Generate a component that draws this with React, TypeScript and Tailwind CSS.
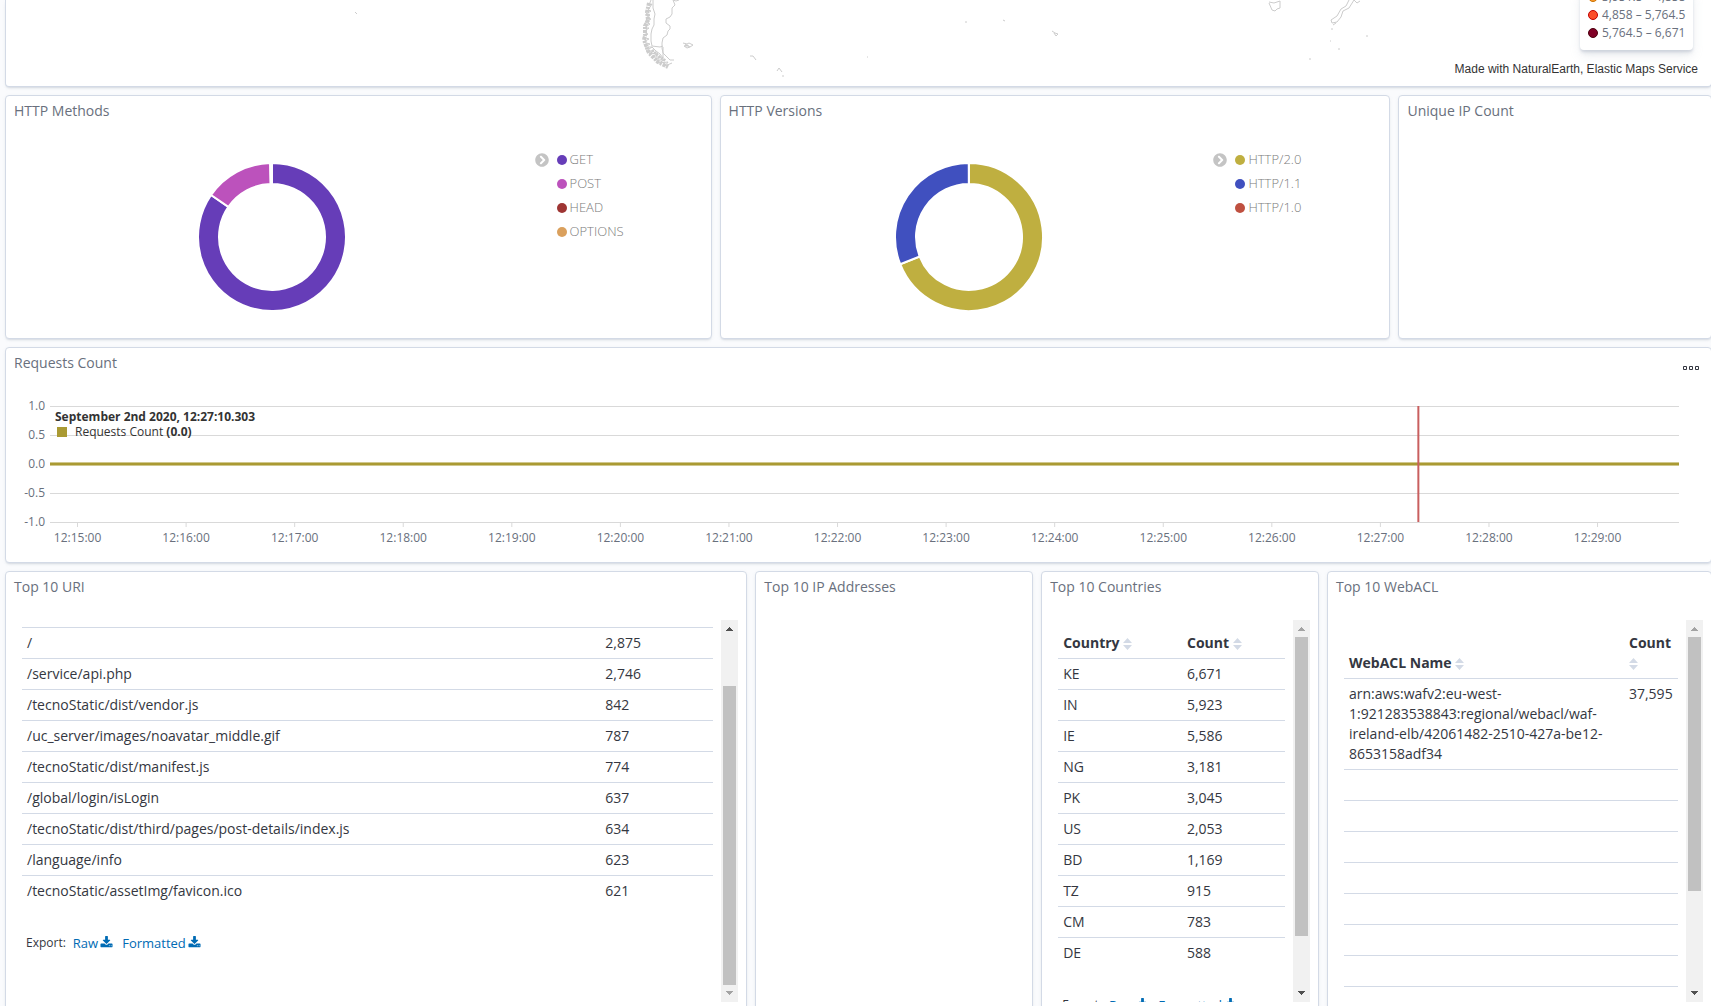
import type { ReactNode } from 'react';
import { FaChevronCircleRight } from 'react-icons/fa';

interface Slice {
    label: string;
    color: string;
    from: number;
    to: number;
}

interface Column {
    title: string;
    width?: string;
}

const METHODS: Slice[] = [
    { label: 'GET', color: '#663db8', from: 0, to: 304.6 },
    { label: 'POST', color: '#bc52bc', from: 304.6, to: 358.6 },
    { label: 'HEAD', color: '#9e3533', from: 358.6, to: 359.4 },
    { label: 'OPTIONS', color: '#daa05d', from: 359.4, to: 360 },
];

const VERSIONS: Slice[] = [
    { label: 'HTTP/2.0', color: '#bfaf40', from: 0, to: 248.4 },
    { label: 'HTTP/1.1', color: '#4050bf', from: 248.4, to: 359.9 },
    { label: 'HTTP/1.0', color: '#bf5040', from: 359.9, to: 360 },
];

const MAP_LEGEND = [
    { label: '3,951.5 – 4,858', fill: '#fd9a2c', border: '#c87200' },
    { label: '4,858 – 5,764.5', fill: '#fc4e2a', border: '#c00000' },
    { label: '5,764.5 – 6,671', fill: '#800026', border: '#4d0010' },
];

const URIS = [
    ['/', '2,875'],
    ['/service/api.php', '2,746'],
    ['/tecnoStatic/dist/vendor.js', '842'],
    ['/uc_server/images/noavatar_middle.gif', '787'],
    ['/tecnoStatic/dist/manifest.js', '774'],
    ['/global/login/isLogin', '637'],
    ['/tecnoStatic/dist/third/pages/post-details/index.js', '634'],
    ['/language/info', '623'],
    ['/tecnoStatic/assetImg/favicon.ico', '621'],
];

const COUNTRIES = [
    ['KE', '6,671'],
    ['IN', '5,923'],
    ['IE', '5,586'],
    ['NG', '3,181'],
    ['PK', '3,045'],
    ['US', '2,053'],
    ['BD', '1,169'],
    ['TZ', '915'],
    ['CM', '783'],
    ['DE', '588'],
];

// The table is padded with blank rows up to the page size
const WEB_ACLS = [
    ['arn:aws:wafv2:eu-west-1:921283538843:regional/webacl/waf-ireland-elb/42061482-2510-427a-be12-8653158adf34', '37,595'],
    ...Array.from({ length: 9 }, () => ['', '']),
];

const Y_TICKS = ['1.0', '0.5', '0.0', '-0.5', '-1.0'];
const X_TICKS = Array.from({ length: 15 }, (_, i) => `12:${15 + i}:00`);

function Panel({ title, action, className = '', children }: { title: string; action?: ReactNode; className?: string; children?: ReactNode }) {
    return (
        <section className={`flex min-h-0 flex-col rounded border border-[#d3dae6] bg-white shadow-[0_2px_2px_-1px_rgba(152,162,179,0.3),0_1px_5px_-2px_rgba(152,162,179,0.3)] ${className}`}>
            <header className="flex h-[30px] shrink-0 items-start justify-between px-2">
                <h2 className="text-sm leading-[30px] text-[#69707d]">{title}</h2>
                {action}
            </header>
            {children}
        </section>
    );
}

function arcPath(from: number, to: number) {
    const outer = 74;
    const inner = 53;
    const point = (r: number, deg: number) => {
        const a = (deg * Math.PI) / 180;
        return `${74 + r * Math.sin(a)} ${74 - r * Math.cos(a)}`;
    };
    const large = to - from > 180 ? 1 : 0;
    return `M${point(outer, from)}A${outer} ${outer} 0 ${large} 1 ${point(outer, to)}L${point(inner, to)}A${inner} ${inner} 0 ${large} 0 ${point(inner, from)}Z`;
}

function DonutPanel({ title, slices, className }: { title: string; slices: Slice[]; className: string }) {
    return (
        <Panel title={title} className={className}>
            <div className="flex">
                <div className="flex flex-1 justify-center pt-[37px] pb-[27px] pl-2">
                    <svg width="148" height="148" viewBox="0 0 148 148" role="img" aria-label={title}>
                        {slices.map((s) => (
                            <path key={s.label} d={arcPath(s.from, s.to)} fill={s.color} stroke="#fff" strokeWidth="2" />
                        ))}
                    </svg>
                </div>
                <div className="flex w-[180px] items-start gap-2 pt-[22px] pl-1">
                    <button type="button" aria-label="Toggle legend" className="flex h-6 items-center text-[#c4c4c4]">
                        <FaChevronCircleRight className="size-[14px]" />
                    </button>
                    <ul>
                        {slices.map((s) => (
                            <li key={s.label} className="flex h-6 items-center gap-[3px] text-[13px] font-light text-[#7b7b7b]">
                                <svg width="10" height="10" viewBox="0 0 10 10">
                                    <circle cx="5" cy="5" r="5" fill={s.color} />
                                </svg>
                                {s.label}
                            </li>
                        ))}
                    </ul>
                </div>
            </div>
        </Panel>
    );
}

function MapPanel() {
    return (
        <section className="relative flex h-[87px] shrink-0 flex-col items-end justify-between rounded-b border border-t-0 border-[#d3dae6] bg-white pr-[13px] pb-[7px] shadow-[0_2px_2px_-1px_rgba(152,162,179,0.3),0_1px_5px_-2px_rgba(152,162,179,0.3)]">
            <svg className="absolute inset-0 h-full w-full" viewBox="6 0 1705 86" fill="none" stroke="#ccc" strokeWidth="1">
                {/* Chile and Argentina */}
                <path d="M653 0v8l2 6-1 5 0 6-2 4-1 5 0 7 1 5 8 1 3-1" />
                <path d="M673 0l3 1 3-1M673 0l2 5-3 3 0 6-2 3-4 2v4l4 3v3l-2 2-1 4-4 3-1 5v5l1 5 5 5 2 2 4 0" />
                <path d="M663 47v14M652 47l4 4 4 3 3 4" />
                <path d="M651 0l-2 5 3-1-4 6 3 1-5 3 4 1-4 3 5 1-6 3 5 2-6 4 5 0-6 4 5 2-5 3 6 2-6 3 7 2-5 3 7 0-6 4 8 0-5 3 9-1-6 4 9 0-6 3 9 0-5 3 9-1-3 4 7-3" />
                <path d="M649 3l-2 9 1 8-3 6 0 9-1 5 3 8 2 5 5 5 4 4 6 3 4 2" strokeWidth="4" strokeDasharray="3 1 2 1" />
                <path d="M648 14v8M652 50l6 6 8 5" strokeWidth="3" strokeDasharray="2 1" />
                {/* Falklands and the southern islands */}
                <path d="M683 43l4 1 2-1 4 2-3 2-3 1-3-2 4-1M685 46l4 0M685 44l5 3M750 56l3 0 3 4M777 71l2-3 3 4M783 75l0 2" />
                <path d="M355 12l2 2M965 22h2M1003 20l2 1M1052 31l3 2 3 1-2 2-2-3M867 57h1" />
                {/* Tasmania and New Zealand */}
                <path d="M1269 2l5 1 6-2 0 7-3 1-2 2-3-1-3-7" />
                <path d="M1349 0l-3 6-5 3-4 7-6 4 1 3 5-1 4-5 2-6 6-3 5-8M1354 0l3 3 3-2M1333 25l3-2M1331 29h2M1366 36h2M1330 41h1M1338 49h2M1309 59h2" />
            </svg>
            <div className="relative mt-[-12px] mr-[5px] w-[113px] rounded bg-white px-2 pb-2 shadow-[0_6px_12px_-1px_rgba(152,162,179,0.2),0_4px_4px_-1px_rgba(152,162,179,0.2),0_2px_2px_0_rgba(152,162,179,0.2)]">
                <ul>
                    {MAP_LEGEND.map((item) => (
                        <li key={item.label} className="flex h-[18px] items-center gap-1 text-xs font-medium whitespace-nowrap text-[#69707d]">
                            <svg className="shrink-0" width="10" height="10" viewBox="0 0 10 10">
                                <circle cx="5" cy="5" r="4.5" fill={item.fill} stroke={item.border} />
                            </svg>
                            {item.label}
                        </li>
                    ))}
                </ul>
            </div>
            <p className="relative font-['Liberation_Sans',sans-serif] text-xs leading-5 text-[#333]">Made with NaturalEarth, Elastic Maps Service</p>
        </section>
    );
}

function RequestsPanel() {
    const menu = (
        <button type="button" aria-label="Series options" className="flex h-10 w-6 items-center justify-center">
            <svg width="16" height="4" viewBox="0 0 16 4" fill="none" stroke="#343741">
                <path d="M.5 .5h3v3h-3zM6.5 .5h3v3h-3zM12.5 .5h3v3h-3z" />
            </svg>
        </button>
    );

    return (
        <Panel title="Requests Count" action={menu} className="shrink-0">
            <div className="relative mr-8 mb-[14px] ml-[44px]">
                <svg className="block h-[170px] w-full overflow-visible text-xs" fill="#69707d">
                    {Y_TICKS.map((label, i) => (
                        <g key={label}>
                            <line x1="0" x2="100%" y1={28.5 + i * 29} y2={28.5 + i * 29} stroke="#d9d9d9" />
                            <text x="-5" y={32 + i * 29} textAnchor="end">{label}</text>
                        </g>
                    ))}
                    {X_TICKS.map((label, i) => (
                        <g key={label}>
                            <line x1={`${1.69 + i * 6.665}%`} x2={`${1.69 + i * 6.665}%`} y1="144" y2="149" stroke="#d9d9d9" />
                            <text x={`${1.69 + i * 6.665}%`} y="164" textAnchor="middle">{label}</text>
                        </g>
                    ))}
                    <line x1="0" x2="100%" y1="86" y2="86" stroke="#aa9a33" strokeOpacity="0.55" strokeWidth="4" />
                    <line x1="0" x2="100%" y1="86" y2="86" stroke="#aa9a33" strokeWidth="2" />
                    <line x1="84%" x2="84%" y1="28" y2="144" stroke="#c95f5f" strokeWidth="2" />
                </svg>
                <div className="absolute top-[31px] left-[5px] text-xs leading-[15px] text-[#333]">
                    <p className="font-bold">September 2nd 2020, 12:27:10.303</p>
                    <p className="flex items-center gap-2 pl-[2px]">
                        <span className="size-[10px] bg-[#aa9a33]" />
                        <span>Requests Count <b>(0.0)</b></span>
                    </p>
                </div>
            </div>
        </Panel>
    );
}

// size and offset are fractions of the track
function ScrollBar({ size, offset = 0 }: { size: number; offset?: number }) {
    return (
        <div className="flex w-[17px] shrink-0 flex-col bg-[#f1f1f1]">
            <svg width="17" height="17" viewBox="0 0 17 17" fill={offset > 0 ? '#505050' : '#a3a3a3'} shapeRendering="crispEdges">
                <path d="M5 11l3.500-4 3.500 4z" />
            </svg>
            <div className="flex-1 px-[2px]">
                <div style={{ height: `${offset * 100}%` }} />
                <div className="bg-[#c1c1c1]" style={{ height: `${size * 100}%` }} />
            </div>
            <svg width="17" height="17" viewBox="0 0 17 17" fill={offset + size < 1 ? '#505050' : '#a3a3a3'} shapeRendering="crispEdges">
                <path d="M5 6l3.500 4 3.500-4z" />
            </svg>
        </div>
    );
}

function SortIcon() {
    return (
        <svg className="inline-block" width="9" height="12" viewBox="0 0 9 12" fill="#d3dae6">
            <path d="M0 5l4.500-5 4.500 5zM0 7h9l-4.500 5z" />
        </svg>
    );
}

function DownloadIcon() {
    return (
        <svg width="13" height="13" viewBox="0 0 1792 1792" fill="currentColor">
            <path d="M1344 1344q0-26-19-45t-45-19-45 19-19 45 19 45 45 19 45-19 19-45zm256 0q0-26-19-45t-45-19-45 19-19 45 19 45 45 19 45-19 19-45zm128-224v320q0 40-28 68t-68 28h-1472q-40 0-68-28t-28-68v-320q0-40 28-68t68-28h465l135 136q58 56 136 56t136-56l136-136h464q40 0 68 28t28 68zm-325-569q17 41-14 70l-448 448q-18 19-45 19t-45-19l-448-448q-31-29-14-70 17-39 59-39h256v-448q0-26 19-45t45-19h256q26 0 45 19t19 45v448h256q42 0 59 39z" />
        </svg>
    );
}

interface TablePanelProps {
    title: string;
    columns: Column[];
    rows: string[][];
    showHead?: boolean;
    scroll: { size: number; offset?: number };
    className: string;
}

function TablePanel({ title, columns, rows, showHead = true, scroll, className }: TablePanelProps) {
    return (
        <Panel title={title} className={className}>
            <div className="mx-2 mt-[18px] mb-[7px] flex min-h-0 flex-1">
                <div className={`min-w-0 flex-1 overflow-hidden px-2 ${showHead ? 'pt-2' : 'pt-[7px]'}`}>
                    <table className="w-full table-fixed text-left text-sm leading-5 text-[#343741]">
                        <colgroup>
                            {columns.map((c) => (
                                <col key={c.title} className={c.width} />
                            ))}
                        </colgroup>
                        {showHead && (
                            <thead>
                                <tr>
                                    {columns.map((c) => (
                                        <th key={c.title} className="p-[5px] align-bottom font-bold">
                                            <button type="button" className="block text-left">
                                                {c.title} <SortIcon />
                                            </button>
                                        </th>
                                    ))}
                                </tr>
                            </thead>
                        )}
                        <tbody>
                            {rows.map((row, i) => (
                                <tr key={i} className="h-[31px] border-t border-[#d3dae6]">
                                    {row.map((cell, j) => (
                                        <td key={j} className="p-[5px] align-top">{cell}</td>
                                    ))}
                                </tr>
                            ))}
                        </tbody>
                    </table>
                    <div className="mt-[26px] flex items-center gap-[7px] pl-1 text-xs leading-5 text-[#343741]">
                        <span>Export:</span>
                        <a href="#raw" className="flex items-center gap-[2px] text-[13px] text-[#006bb4]">
                            Raw <DownloadIcon />
                        </a>
                        <a href="#formatted" className="ml-[2px] flex items-center gap-[2px] text-[13px] text-[#006bb4]">
                            Formatted <DownloadIcon />
                        </a>
                    </div>
                </div>
                <ScrollBar {...scroll} />
            </div>
        </Panel>
    );
}

export default function App() {
    return (
        <div className="overflow-hidden">
            <main className="-mr-px flex h-screen flex-col gap-2 overflow-hidden bg-[#fafbfd] pl-[5px] font-['Open_Sans',sans-serif]">
                <MapPanel />
                <div className="grid shrink-0 grid-cols-[repeat(48,minmax(0,1fr))] gap-x-2">
                    <DonutPanel title="HTTP Methods" slices={METHODS} className="col-span-20" />
                    <DonutPanel title="HTTP Versions" slices={VERSIONS} className="col-span-19" />
                    <Panel title="Unique IP Count" className="col-span-9" />
                </div>
                <RequestsPanel />
                <div className="-mb-1 grid min-h-0 flex-1 grid-cols-[repeat(48,minmax(0,1fr))] grid-rows-[minmax(0,1fr)] gap-x-2">
                    <TablePanel
                        title="Top 10 URI"
                        columns={[{ title: 'URI' }, { title: 'Count', width: 'w-[113px]' }]}
                        rows={URIS}
                        showHead={false}
                        scroll={{ size: 0.859, offset: 0.141 }}
                        className="col-span-21"
                    />
                    <Panel title="Top 10 IP Addresses" className="col-span-8" />
                    <TablePanel
                        title="Top 10 Countries"
                        columns={[{ title: 'Country' }, { title: 'Count', width: 'w-[103px]' }]}
                        rows={COUNTRIES}
                        scroll={{ size: 0.859 }}
                        className="col-span-8"
                    />
                    <TablePanel
                        title="Top 10 WebACL"
                        columns={[{ title: 'WebACL Name' }, { title: 'Count', width: 'w-[54px]' }]}
                        rows={WEB_ACLS}
                        scroll={{ size: 0.73 }}
                        className="col-span-11"
                    />
                </div>
            </main>
        </div>
    );
}
